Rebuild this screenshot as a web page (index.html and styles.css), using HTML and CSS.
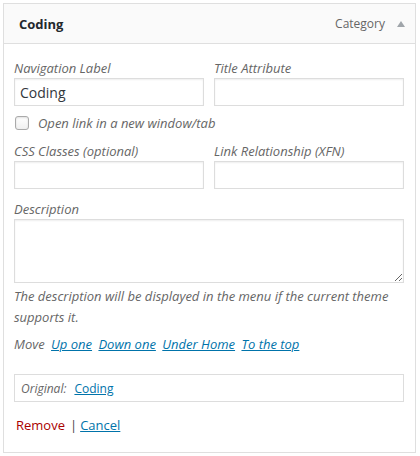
FILE: index.html
```html
<!DOCTYPE html>
<html>
<head>
<meta charset="utf-8">
<link rel="stylesheet" href="styles.css">
</head>
<body>
<div class="item">
  <div class="handle">
    <span class="title">Coding</span>
    <span class="controls"><span class="type">Category</span><span class="arrow"></span></span>
  </div>
  <div class="settings">
    <div class="row">
      <label class="field">
        <span class="lbl">Navigation Label</span>
        <input class="input" type="text" value="Coding">
      </label>
      <label class="field">
        <span class="lbl">Title Attribute</span>
        <input class="input" type="text" value="">
      </label>
    </div>
    <label class="check">
      <input type="checkbox" class="cb">
      <span class="lbl">Open link in a new window/tab</span>
    </label>
    <div class="row">
      <label class="field">
        <span class="lbl">CSS Classes (optional)</span>
        <input class="input" type="text" value="">
      </label>
      <label class="field">
        <span class="lbl">Link Relationship (XFN)</span>
        <input class="input" type="text" value="">
      </label>
    </div>
    <label class="field wide">
      <span class="lbl">Description</span>
      <textarea class="textarea"></textarea>
    </label>
    <p class="note">The description will be displayed in the menu if the current theme supports it.</p>
    <p class="move">Move <a href="#">Up one</a> <a href="#">Down one</a> <a href="#">Under Home</a> <a href="#">To the top</a></p>
    <div class="original"><span>Original:</span><a href="#">Coding</a></div>
    <div class="actions"><a href="#" class="remove">Remove</a><span class="sep">|</span><a href="#" class="cancel">Cancel</a></div>
  </div>
</div>
</body>
</html>
```

FILE: styles.css
```css
* { box-sizing: border-box; }
html, body { margin: 0; padding: 0; background: #fff; }
body {
  font-family: "Open Sans", "Liberation Sans", sans-serif;
  font-size: 13px;
  color: #444;
}
.item {
  margin: 3px 0 0 3px;
  width: 413px;
  height: 450px;
  border: 1px solid #dfdfdf;
  background: #fff;
}
.handle {
  height: 40px;
  background: #fafafa;
  border-bottom: 1px solid #dfdfdf;
  display: flex;
  align-items: center;
  justify-content: space-between;
  padding: 0 10px 0 15px;
}
.title {
  font-weight: 700;
  font-size: 13px;
  color: #23282d;
}
.controls {
  display: flex;
  align-items: center;
  gap: 12px;
}
.type {
  color: #666;
  font-size: 12px;
}
.arrow {
  width: 0;
  height: 0;
  border-left: 4px solid transparent;
  border-right: 4px solid transparent;
  border-bottom: 6px solid #a0a5aa;
}
.settings {
  padding: 14px 11px 0 10px;
}
.row {
  display: flex;
  gap: 10px;
}
.field {
  display: flex;
  flex-direction: column;
  flex: 1;
}
.lbl {
  font-style: italic;
  color: #666;
  line-height: 20px;
}
.input {
  height: 28px;
  border: 1px solid #ddd;
  box-shadow: inset 0 1px 2px rgba(0,0,0,.07);
  font-family: inherit;
  font-size: 14px;
  color: #32373c;
  padding: 3px 5px;
  margin: 0;
  outline: none;
  width: 100%;
}
.check {
  display: flex;
  align-items: center;
  gap: 9px;
  margin: 9px 0 10px 1px;
  height: 16px;
}
.cb {
  appearance: none;
  -webkit-appearance: none;
  width: 14px;
  height: 14px;
  margin: 0;
  border: 1px solid #aaa;
  border-radius: 3px;
  background: linear-gradient(#fff, #f0f0f0);
  box-shadow: inset 0 1px 2px rgba(0,0,0,.12);
}
.wide { margin-top: 10px; }
.textarea {
  height: 64px;
  border: 1px solid #ddd;
  box-shadow: inset 0 1px 2px rgba(0,0,0,.07);
  margin: 0;
  width: 100%;
  font-family: inherit;
  resize: both;
}
.note {
  margin: 3px 0 0;
  font-style: italic;
  color: #666;
  line-height: 21px;
}
.move {
  margin: 6px 0 0;
  font-style: italic;
  color: #666;
  line-height: 20px;
  word-spacing: 2px;
}
a { color: #0073aa; text-decoration: underline; }
.move a { word-spacing: 0; margin-left: 1px; }
.original {
  margin-top: 20px;
  height: 28px;
  border: 1px solid #ddd;
  padding: 0 6px;
  display: flex;
  align-items: center;
  gap: 8px;
  font-size: 12px;
  font-style: italic;
  color: #666;
}
.original a { font-style: normal; }
.actions {
  margin-top: 13px;
  line-height: 20px;
  padding-left: 2px;
  display: flex;
}
.remove { color: #a00; text-decoration: none; }
.sep { color: #444; margin: 0 1px 0 5px; }
.cancel { padding: 0 2px; }
```
